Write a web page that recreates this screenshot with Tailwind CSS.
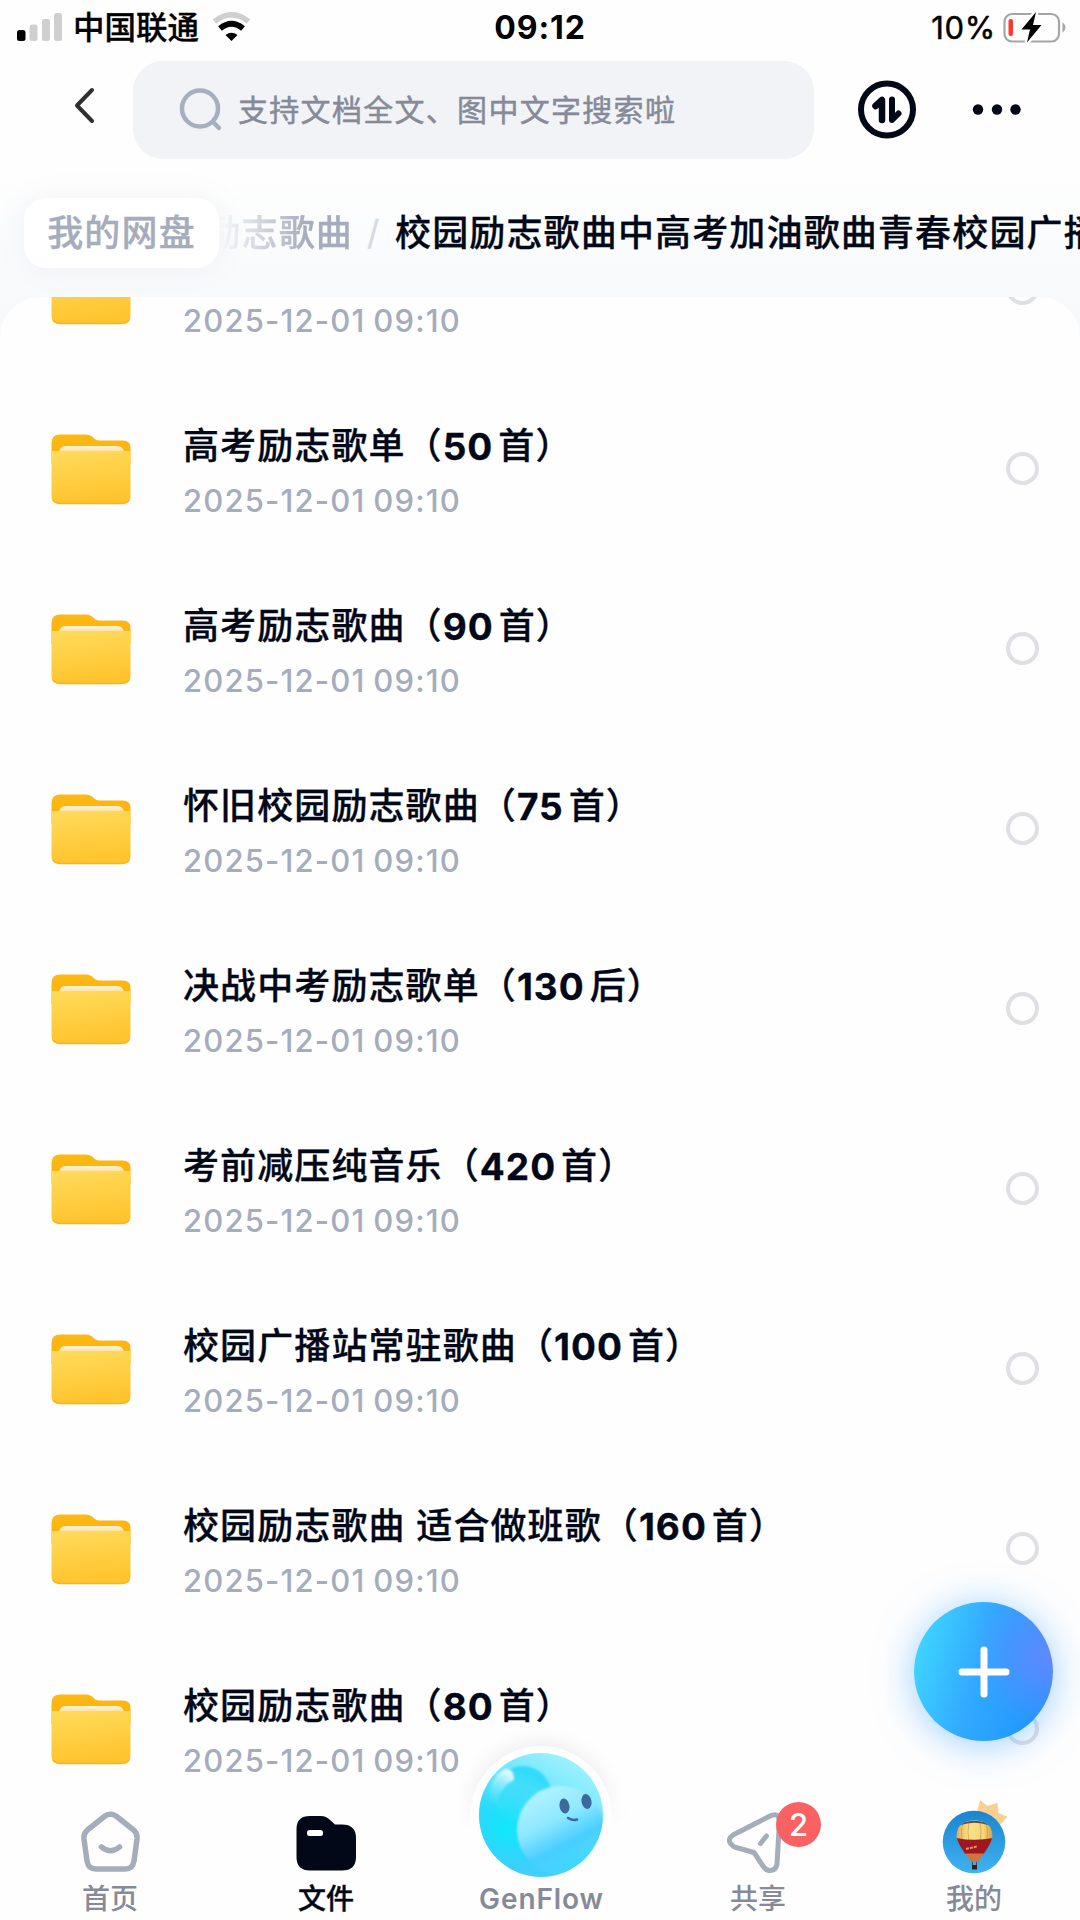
<!DOCTYPE html>
<html lang="zh-CN">
  <head>
    <meta charset="UTF-8" />
    <meta name="viewport" content="width=device-width, initial-scale=1.0" />
    <title>我的网盘</title>
    <script src="https://cdn.jsdelivr.net/npm/@tailwindcss/browser@4"></script>
  </head>
  <body class="bg-white">
  <!-- Folder gradients, shared by all rows -->
  <svg class="absolute w-0 h-0">
    <defs>
      <linearGradient id="folderBack" x1="0" y1="0" x2="0" y2="1">
        <stop offset="0" stop-color="#fdb813" />
        <stop offset="1" stop-color="#fcb20c" />
      </linearGradient>
      <linearGradient id="folderFront" x1="0" y1="0" x2="0.200" y2="1">
        <stop offset="0" stop-color="#ffdb5c" />
        <stop offset="1" stop-color="#ffc42e" />
      </linearGradient>
      <linearGradient id="folderPaper" x1="0" y1="0" x2="0" y2="1">
        <stop offset="0" stop-color="#fff3d6" />
        <stop offset="1" stop-color="#ffd98a" />
      </linearGradient>
    </defs>
  </svg>

  <div class="relative w-[1080px] h-[1920px] overflow-hidden flex flex-col bg-[#fefefe] font-['Inter','Noto_Sans_CJK_SC',sans-serif] text-[#030818]">

    <!-- Status bar -->
    <div class="relative h-[54px] shrink-0 flex items-center justify-between pl-[17px] pr-[13px] text-black">
      <div class="flex items-center">
        <svg class="w-[46px] h-[30px]" viewBox="0 0 46 30">
          <rect x="0" y="18" width="8.5" height="11" rx="2.5" fill="#000" />
          <rect x="12.5" y="12.5" width="8" height="16.5" rx="2.5" fill="#cfcfcf" />
          <rect x="25" y="7" width="8" height="22" rx="2.5" fill="#cfcfcf" />
          <rect x="37" y="1" width="8" height="28" rx="2.5" fill="#cfcfcf" />
        </svg>
        <span class="ml-[10px] mt-px text-[31.5px] leading-none font-medium [-webkit-text-stroke:0.3px]">中国联通</span>
        <svg class="ml-[13px] w-[39px] h-[30px]" viewBox="0 0 39 30">
          <path d="M2.5 9.5 Q19.5 -4 36.5 9.5" fill="none" stroke="#cfcfcf" stroke-width="5.5" />
          <path d="M8 16.5 Q19.5 7 31 16.5" fill="none" stroke="#000" stroke-width="6" />
          <path d="M19.5 29 L13.5 23 Q19.5 18.5 25.5 23 Z" fill="#000" />
        </svg>
      </div>
      <span class="absolute left-0 right-0 mt-px text-center text-[32px] leading-none font-bold tracking-[0.9px]">09:12</span>
      <div class="flex items-center">
        <span class="text-[31px] leading-none tracking-[0.7px] [-webkit-text-stroke:0.5px]">10%</span>
        <svg class="ml-[7px] w-[64px] h-[34px]" viewBox="0 0 64 34">
          <rect x="1.5" y="4" width="54.5" height="27.5" rx="7.5" fill="none" stroke="#a5a5a5" stroke-width="2.2" />
          <path d="M59.5 12 q6 5.5 0 11 z" fill="#a5a5a5" />
          <rect x="5.5" y="9" width="4.5" height="17" rx="2" fill="#fb3b30" />
          <path d="M33 2 L18.5 19.5 H27 L24 32.5 L38.5 15 H30 Z" fill="#000" stroke="#fefefe" stroke-width="5" paint-order="stroke" />
        </svg>
      </div>
    </div>

    <!-- Search -->
    <div class="h-[122px] shrink-0 flex items-start pl-[73px] pt-[7px]">
      <svg class="mt-[26px] w-[24px] h-[38px]" viewBox="0 0 24 38" fill="none" stroke="#303030" stroke-width="4" stroke-linecap="round" stroke-linejoin="round">
        <path d="M19 3 L4 18.5 L19 34" />
      </svg>
      <div class="ml-[36px] w-[681px] h-[98px] rounded-[30px] bg-[#f1f3f7] flex items-center pl-[46px]">
        <svg class="w-[44px] h-[44px]" viewBox="0 0 44 44" fill="none" stroke="#a7aebd" stroke-width="4.5" stroke-linecap="round">
          <circle cx="21" cy="20.5" r="18" />
          <path d="M34 34 L40 40" />
        </svg>
        <span class="ml-[15px] text-[30px] leading-none tracking-[1.3px] text-[#868a98] [-webkit-text-stroke:0.5px]">支持文档全文、图中文字搜索啦</span>
      </div>
      <svg class="ml-[43px] mt-[18px] w-[60px] h-[60px]" viewBox="0 0 60 60" fill="none" stroke="#030818" stroke-linecap="round" stroke-linejoin="round">
        <circle cx="30" cy="30.5" r="26" stroke-width="6" />
        <path d="M18.5 27 L25 21 V41" stroke-width="6.5" />
        <path d="M35 20.5 V41 L41.5 34.5" stroke-width="6" />
        <path d="M25 21 V28 L18.5 27 Z M35 41 V35 H41 Z" fill="#030818" />
      </svg>
      <svg class="ml-[55px] mt-[42px] w-[50px] h-[12px]" viewBox="0 0 50 12" fill="#030818">
        <circle cx="6" cy="6.5" r="5.2" />
        <circle cx="25" cy="6.5" r="5.2" />
        <circle cx="43.5" cy="6.5" r="5.2" />
      </svg>
    </div>

    <!-- Breadcrumb -->
    <div class="h-[160px] shrink-0 flex items-start pt-[22px] pl-[24px] bg-linear-to-b from-[#fefefe] to-[#f7f9fb] to-80% text-[36px] font-medium tracking-[1.15px] whitespace-nowrap [-webkit-text-stroke:0.3px]">
      <div class="relative z-10 w-[195px] h-[70px] shrink-0 rounded-[22px] bg-white shadow-[0_0_30px_rgba(120,130,150,0.08)] flex items-center justify-center leading-none text-[#a5acbc]">我的网盘</div>
      <div class="h-[70px] flex items-center leading-none">
        <span class="w-[134px] flex justify-end overflow-hidden text-[#a5acbc] mask-l-from-35% mask-l-to-100%">励志歌曲</span>
        <span class="ml-[14px] w-[16px] text-[#d8dae0] text-[34px] font-normal">/</span>
        <span class="ml-[12px]">校园励志歌曲中高考加油歌曲青春校园广播站</span>
      </div>
    </div>

    <!-- File list -->
    <div class="-mt-[39px] h-[1483px] shrink-0 rounded-t-[40px] bg-[#fefefe] overflow-hidden">
      <div id="fileList" class="-mt-[99px]"></div>
    </div>

    <!-- Add button -->
    <button class="absolute left-[914px] top-[1602px] w-[139px] h-[139px] rounded-full bg-[radial-gradient(circle_at_100%_38%,#6488ff_0%,#6488ff00_48%),linear-gradient(105deg,#3fdaff_4%,#33aaff_45%,#1f98ff_85%)] shadow-[0_4px_38px_rgba(60,160,255,0.5)] flex items-center justify-center">
      <svg class="w-[52px] h-[52px]" viewBox="0 0 52 52" stroke="#fff" stroke-width="7" stroke-linecap="round">
        <path d="M26 4 V48 M4 26 H48" />
      </svg>
    </button>

    <!-- Tab bar -->
    <div class="absolute left-[2px] bottom-0 w-[1080px] h-[140px] grid grid-cols-5 text-[28px] leading-none font-medium text-[#868a98]">
      <div class="flex flex-col items-center pt-[31px]">
        <svg class="w-[62px] h-[62px]" viewBox="0 0 62 62" fill="none" stroke="#a5acbc" stroke-width="5.5" stroke-linecap="round" stroke-linejoin="round">
          <path d="M26 5 Q31.5 1.5 37 5 L54 18.5 Q58.5 22 58 28 L55 50 Q54 58 46 58 H17 Q9 58 8 50 L5 28 Q4.5 22 9 18.5 Z" />
          <path d="M22.5 36 Q31.5 43.5 40.5 36" />
        </svg>
        <span class="mt-[12px]">首页</span>
      </div>
      <div class="flex flex-col items-center pt-[32px] text-[#030818]">
        <svg class="w-[62px] h-[62px]" viewBox="0 0 62 62">
          <path d="M1.5 17 Q1.5 4 15 4 H26 Q31 4 35 8 L40 12.5 H47 Q61 12.5 61 26 V45 Q61 58.5 47 58.5 H15 Q1.5 58.5 1.5 45 Z" fill="#030818" />
          <rect x="12" y="18" width="16" height="6" rx="2.5" fill="#fff" />
        </svg>
        <span class="mt-[11px] [-webkit-text-stroke:0.4px]">文件</span>
      </div>
      <div class="relative flex flex-col items-center">
        <!-- halo over the list -->
        <div class="absolute left-[36px] -top-[34px] w-[142px] h-[142px] rounded-full bg-[#fefefe] shadow-[0_-4px_20px_rgba(0,0,0,0.07)]"></div>
        <div class="absolute left-0 top-0 w-[216px] h-[108px] bg-[#fefefe] mask-t-from-50%"></div>
        <svg class="relative -mt-[28px] mr-[2px] w-[126px] h-[126px] shrink-0" viewBox="0 0 126 126">
          <defs>
            <linearGradient id="ball" x1="0.75" y1="0.1" x2="0.3" y2="0.9">
              <stop offset="0" stop-color="#9af0ff" />
              <stop offset="0.35" stop-color="#6ce6fb" />
              <stop offset="0.7" stop-color="#2fdcfd" />
              <stop offset="1" stop-color="#45cdfd" />
            </linearGradient>
            <radialGradient id="deep" cx="0.22" cy="0.62" r="0.4">
              <stop offset="0" stop-color="#0eeafb" />
              <stop offset="1" stop-color="#25d3f8" stop-opacity="0" />
            </radialGradient>
            <linearGradient id="lobe" x1="0.7" y1="0.2" x2="0.3" y2="1">
              <stop offset="0" stop-color="#22d8f8" stop-opacity="0.8" />
              <stop offset="1" stop-color="#5ce3fa" stop-opacity="0.3" />
            </linearGradient>
            <linearGradient id="face" x1="0.2" y1="0.05" x2="0.65" y2="0.95">
              <stop offset="0" stop-color="#b4f3ff" />
              <stop offset="0.4" stop-color="#8ee8fe" />
              <stop offset="0.7" stop-color="#48ceff" />
              <stop offset="1" stop-color="#4fd4ff" stop-opacity="0.4" />
            </linearGradient>
            <linearGradient id="shine" x1="0.7" y1="0" x2="0.2" y2="1">
              <stop offset="0" stop-color="#ecfdff" />
              <stop offset="1" stop-color="#6fe6fb" stop-opacity="0" />
            </linearGradient>
            <filter id="soft"><feGaussianBlur stdDeviation="1.2" /></filter>
            <clipPath id="ballClip"><circle cx="63" cy="63" r="62" /></clipPath>
          </defs>
          <g clip-path="url(#ballClip)">
            <rect width="126" height="126" fill="url(#ball)" />
            <circle cx="45" cy="42" r="28" fill="url(#lobe)" filter="url(#soft)" />
            <rect width="126" height="126" fill="url(#deep)" />
            <path d="M10 50 Q12 24 27 17 Q36 16 36 28 Q22 34 18 54 Z" fill="url(#shine)" filter="url(#soft)" />
            <circle cx="83" cy="78" r="44" fill="url(#face)" filter="url(#soft)" />
          </g>
          <ellipse cx="86.5" cy="54" rx="5" ry="7.5" fill="#3a6b9c" transform="rotate(-10 86.5 54)" />
          <ellipse cx="108.5" cy="49.5" rx="5" ry="7.5" fill="#3a6b9c" transform="rotate(-10 108.5 49.5)" />
          <path d="M90 66 Q95 69 99 67.5" fill="none" stroke="#3a6b9c" stroke-width="2.6" stroke-linecap="round" />
        </svg>
        <span class="relative mt-[7px] mr-px text-[28px] font-semibold tracking-[0.9px]">GenFlow</span>
      </div>
      <div class="relative flex flex-col items-center pt-[31px]">
        <svg class="w-[62px] h-[62px]" viewBox="0 0 62 62" fill="none" stroke="#a5acbc" stroke-width="5" stroke-linecap="round" stroke-linejoin="round">
          <path d="M6 24 L44 4.5 Q52 1.5 52.5 10 L50 53 Q49 59 43.5 59.5 Q39 60 36 55 L27 41.5 L7.5 36 Q-2 29.5 6 24 Z" />
          <path d="M33.5 32.5 L39.5 25" />
        </svg>
        <span class="absolute left-[126px] top-[22px] w-[45px] h-[45px] rounded-full bg-[#f96163] flex items-center justify-center text-[31px] leading-none text-white">2</span>
        <span class="mt-[12px]">共享</span>
      </div>
      <div class="flex flex-col items-center pt-[19px]">
        <svg class="w-[80px] h-[76px]" viewBox="0 0 80 76">
          <defs>
            <linearGradient id="sky" x1="0" y1="0" x2="0" y2="1">
              <stop offset="0" stop-color="#1985d2" />
              <stop offset="1" stop-color="#40b3f0" />
            </linearGradient>
            <linearGradient id="cloth" x1="0" y1="0" x2="1" y2="0">
              <stop offset="0" stop-color="#d9a44e" />
              <stop offset="0.35" stop-color="#fbe08a" />
              <stop offset="0.7" stop-color="#f7d578" />
              <stop offset="1" stop-color="#c98c3c" />
            </linearGradient>
            <clipPath id="envelope"><path d="M22.5 37 Q23 21.5 40.5 21.5 Q58 21.5 58.5 37 Q58 45 43.5 63 H37.5 Q23 45 22.5 37 Z" /></clipPath>
          </defs>
          <path d="M46 1 L53.5 7 L63.5 3.7 L64.5 14 L73.5 17.7 L67 25 L50 22 L43 13 Z" fill="#f9d08f" />
          <circle cx="40" cy="43" r="31.3" fill="url(#sky)" />
          <g clip-path="url(#envelope)">
            <rect x="20" y="20" width="42" height="24" fill="url(#cloth)" />
            <path d="M29 24 Q26 32 29 44 M35 23 Q33 32 35 44 M46 23 Q48 32 46 44 M52 24 Q55 32 52 44" stroke="#c99a45" stroke-width="0.7" fill="none" />
            <path d="M25 25.5 Q40.5 20 56 25.5" stroke="#56504f" stroke-width="2" fill="none" />
            <path d="M20 38.5 Q41 43 62 38.5 V55 H20 Z" fill="#a01722" />
            <path d="M32 50 L43 47.5" stroke="#e09a5a" stroke-width="2" stroke-dasharray="3 1" />
            <rect x="30" y="54.5" width="22" height="9" fill="#cf7440" />
          </g>
          <path d="M38.5 63 V67 M42.5 63 V67" stroke="#4a3428" stroke-width="0.8" />
          <rect x="38" y="66" width="5" height="4.5" fill="#2b2320" />
        </svg>
        <span class="mt-[10px]">我的</span>
      </div>
    </div>
  </div>

  <script>
    const files = [
      ["高考励志歌单", "50", "首"],
      ["高考励志歌单", "50", "首"],
      ["高考励志歌曲", "90", "首"],
      ["怀旧校园励志歌曲", "75", "首"],
      ["决战中考励志歌单", "130", "后"],
      ["考前减压纯音乐", "420", "首"],
      ["校园广播站常驻歌曲", "100", "首"],
      ["校园励志歌曲 适合做班歌", "160", "首"],
      ["校园励志歌曲", "80", "首"],
    ];

    // the first row is scrolled half away, only its date is left
    document.getElementById("fileList").innerHTML = files.map(([name, count, unit], i) => `
      <div class="h-[180px] flex items-center pl-[51px] pr-[41px]">
        <svg class="mt-[2px] w-[80px] h-[71px] shrink-0" viewBox="0 0 80 71">
          <path d="M0.5 9 Q0.5 0.5 9 0.5 H35 Q38.5 0.5 41 2.5 L44.5 5.5 Q46 6.5 49 6.5 H72 Q79.5 6.5 79.5 14 V30 H0.5 Z" fill="url(#folderBack)" />
          <path d="M8 20 Q8 12 15 12 H66 Q73 12 73 20 Z" fill="url(#folderPaper)" />
          <path d="M0.5 17 H79.5 V62 Q79.5 70 71 70 H9 Q0.5 70 0.5 62 Z" fill="url(#folderFront)" />
          <path d="M2 66 Q5 69.5 10 69.5 H70 Q75 69.5 78 66" fill="none" stroke="#fbb414" stroke-width="1.5" />
        </svg>
        <div class="ml-[52px] mt-[10px] flex-1 flex flex-col whitespace-nowrap">
          <div class="h-[54px] flex items-center text-[36px] leading-none font-medium tracking-[1.1px] whitespace-pre [-webkit-text-stroke:0.3px]">${i === 0 ? "" : `${name}（<span class="text-[37px] font-bold tracking-[1px] mr-[5px]">${count}</span>${unit}）`}</div>
          <div class="h-[54px] flex items-center text-[31px] leading-none font-medium text-[#a5acbc] tracking-[1.15px] [word-spacing:-1.5px]">2025-12-01 09:10</div>
        </div>
        <span class="w-[33px] h-[33px] rounded-full border-4 border-[#dfe0e4]"></span>
      </div>`).join("");
  </script>
  </body>
</html>
